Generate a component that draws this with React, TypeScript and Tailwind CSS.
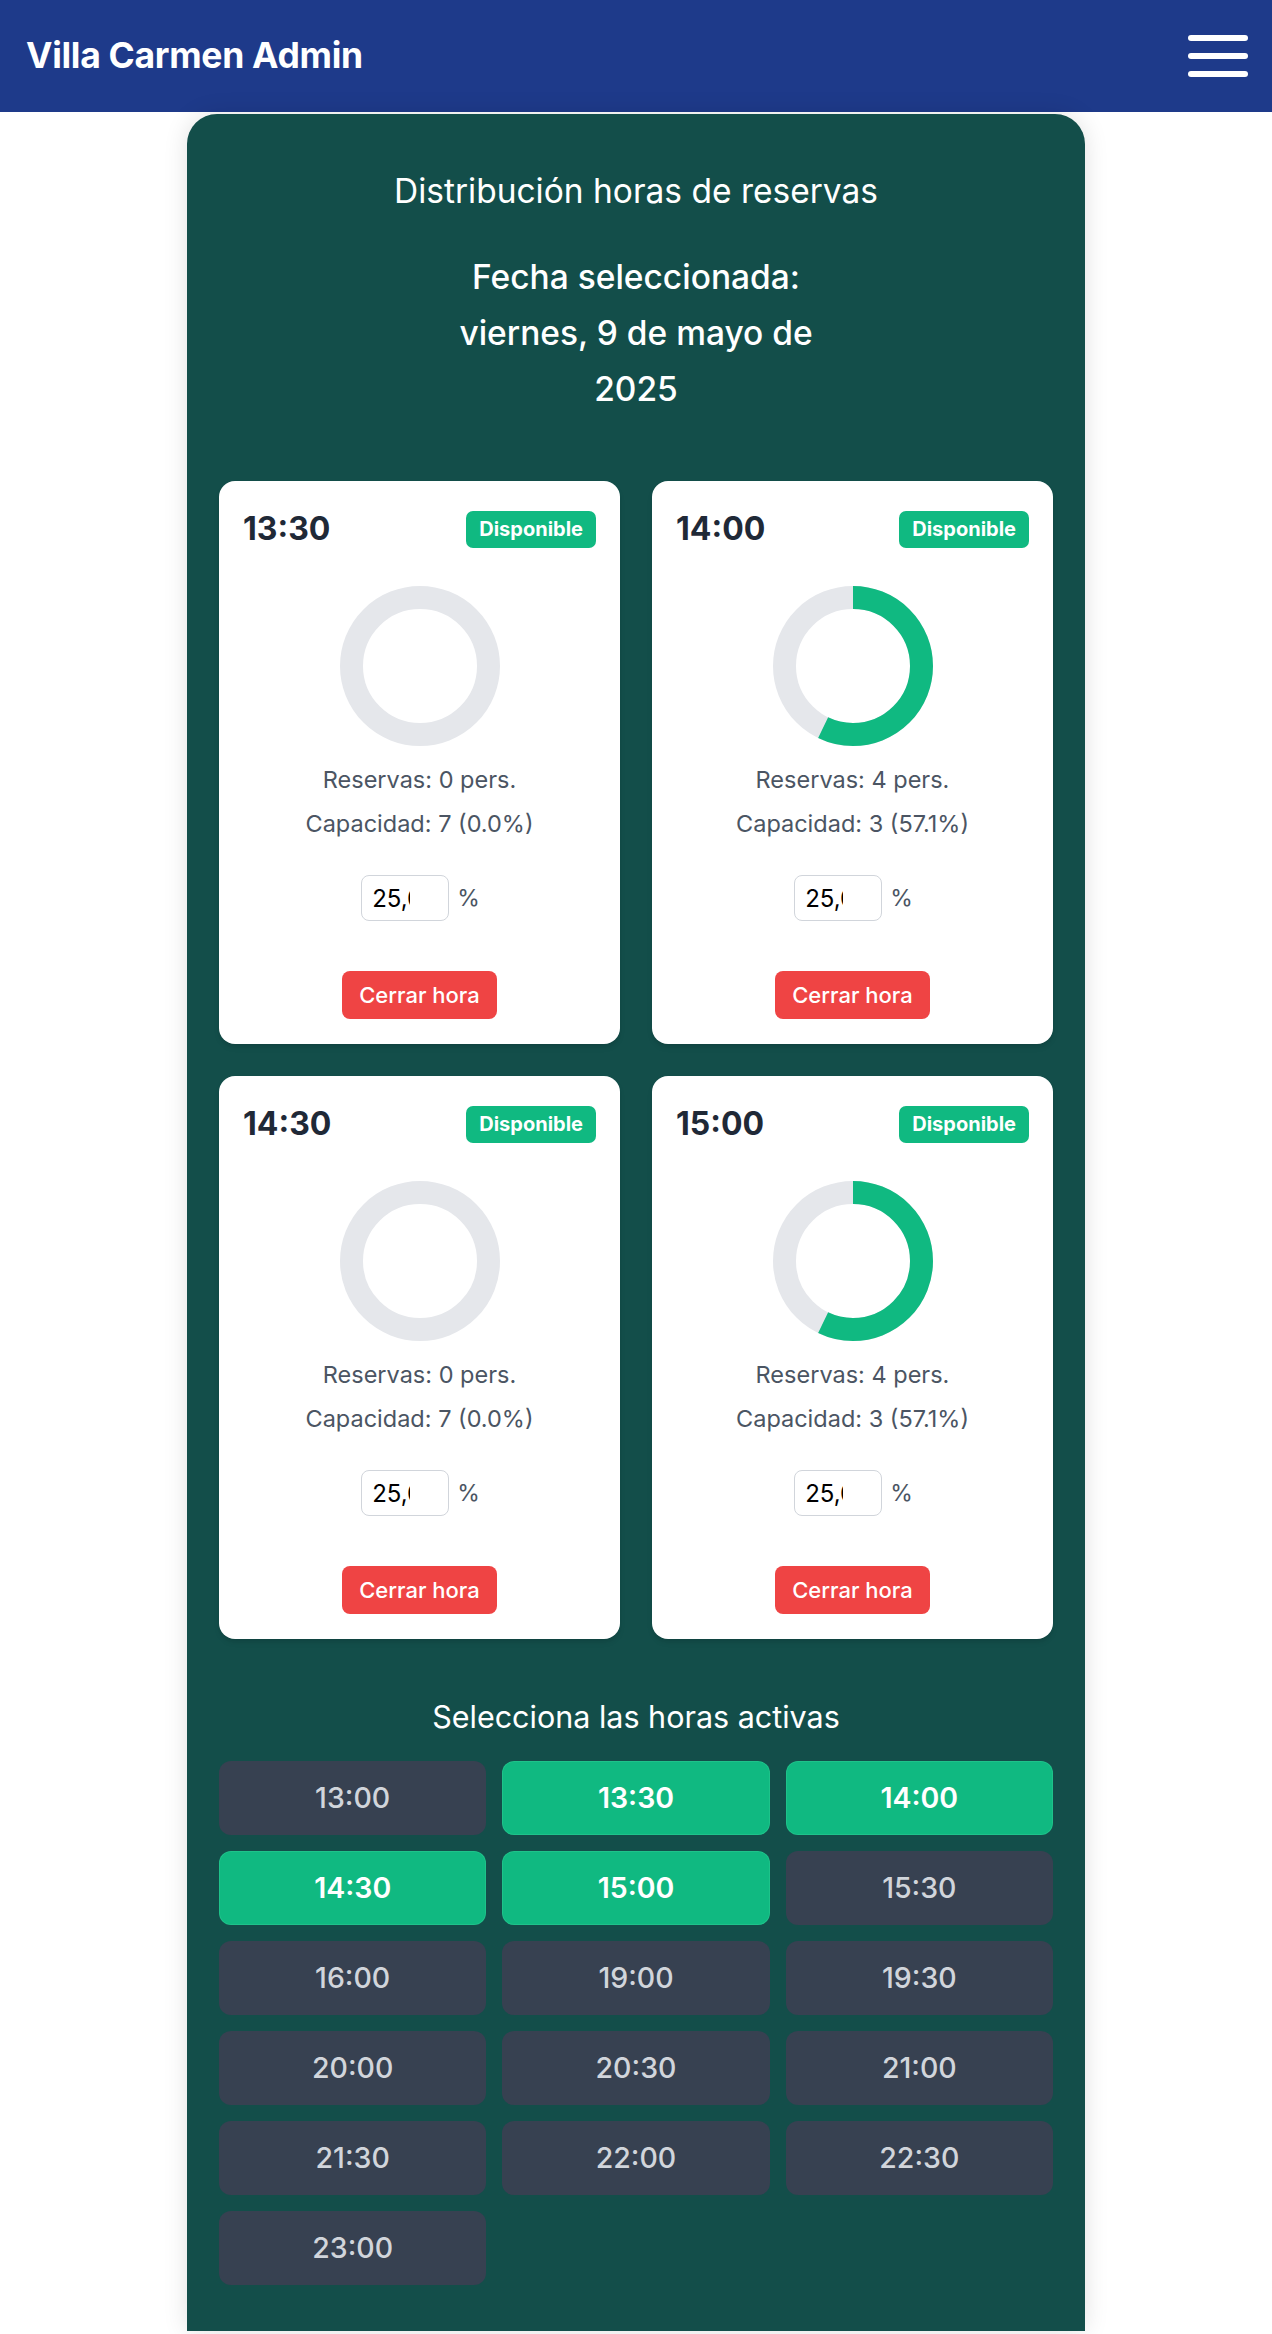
import React from "react";

type Slot = { time: string; reservas: number; capacidad: number; pct: number };

const slots: Slot[] = [
  { time: "13:30", reservas: 0, capacidad: 7, pct: 0 },
  { time: "14:00", reservas: 4, capacidad: 3, pct: 57.1 },
  { time: "14:30", reservas: 0, capacidad: 7, pct: 0 },
  { time: "15:00", reservas: 4, capacidad: 3, pct: 57.1 },
];

const hours = [
  "13:00", "13:30", "14:00", "14:30", "15:00", "15:30", "16:00", "19:00", "19:30",
  "20:00", "20:30", "21:00", "21:30", "22:00", "22:30", "23:00",
];
const active = new Set(["13:30", "14:00", "14:30", "15:00"]);

function Donut({ pct }: { pct: number }) {
  const size = 160;
  const stroke = 23;
  const r = (size - stroke) / 2;
  const c = 2 * Math.PI * r;
  const dash = (pct / 100) * c;
  return (
    <svg width={size} height={size} viewBox={`0 0 ${size} ${size}`}>
      <circle cx={size / 2} cy={size / 2} r={r} fill="none" stroke="#e5e7eb" strokeWidth={stroke} />
      {pct > 0 && (
        <circle
          cx={size / 2}
          cy={size / 2}
          r={r}
          fill="none"
          stroke="#10b981"
          strokeWidth={stroke}
          strokeDasharray={`${dash} ${c}`}
          transform={`rotate(-90 ${size / 2} ${size / 2})`}
        />
      )}
    </svg>
  );
}

function SlotCard({ s }: { s: Slot }) {
  return (
    <div className="bg-white rounded-[16px] pt-[24px] px-[24px] pb-[25px] shadow-md flex flex-col items-center">
      <div className="w-full flex items-center justify-between h-[48px]">
        <span className="text-[32px] leading-[48px] font-bold text-[#1f2937]">{s.time}</span>
        <span className="h-[37px] px-[13px] rounded-[7px] bg-[#10b981] text-white text-[20px] font-bold flex items-center">
          Disponible
        </span>
      </div>
      <div className="mt-[33px] h-[160px]">
        <Donut pct={s.pct} />
      </div>
      <p className="mt-[16px] text-[23.5px] leading-[36px] text-[#4b5563]">Reservas: {s.reservas} pers.</p>
      <p className="mt-[8px] text-[23.5px] leading-[36px] text-[#4b5563]">
        Capacidad: {s.capacidad} ({s.pct.toFixed(1)}%)
      </p>
      <div className="mt-[33px] flex items-center gap-[8px] pl-[2px]">
        <input
          type="text"
          readOnly
          value="25,00"
          className="w-[88px] h-[46px] border border-[#d1d5db] rounded-[8px] pl-[10px] pr-[38px] text-[24px] text-black bg-white outline-none"
        />
        <span className="text-[23px] text-[#4b5563]">%</span>
      </div>
      <button className="mt-[50px] h-[48px] px-[17px] rounded-[8px] bg-[#ef4444] text-white text-[22px] font-medium">
        Cerrar hora
      </button>
    </div>
  );
}

export default function App() {
  return (
    <div className="bg-white min-h-[2334px]" style={{ fontFamily: 'Inter, "Noto Sans", sans-serif' }}>
      <header className="h-[112px] bg-[#1e3a8a] flex items-center justify-between pl-[26px] pr-[24px]">
        <h1 className="text-white text-[35.5px] font-bold tracking-[-0.3px] leading-[44px]">Villa Carmen Admin</h1>
        <div className="flex flex-col gap-[12px] w-[60px]">
          <span className="block h-[6px] w-[60px] rounded-full bg-white" />
          <span className="block h-[6px] w-[60px] rounded-full bg-white" />
          <span className="block h-[6px] w-[60px] rounded-full bg-white" />
        </div>
      </header>
      <main className="w-[898px] mx-auto mt-[2px] bg-[#134e4a] rounded-t-[30px] px-[32px] pt-[53px] pb-[46px] shadow-[0_0_24px_rgba(0,0,0,0.12)]">
        <h2 className="text-center text-white text-[33.5px] leading-[48px]">Distribución horas de reservas</h2>
        <p className="mt-[34px] text-center text-white text-[33.5px] leading-[56px] font-medium">
          Fecha seleccionada:
          <br />
          viernes, 9 de mayo de
          <br />
          2025
        </p>
        <div className="mt-[64px] grid grid-cols-2 gap-[32px]">
          {slots.map((s) => (
            <SlotCard key={s.time} s={s} />
          ))}
        </div>
        <h3 className="mt-[55px] text-center text-white text-[30.5px] leading-[45px]">Selecciona las horas activas</h3>
        <div className="mt-[22px] grid grid-cols-3 gap-[16px]">
          {hours.map((h) =>
            active.has(h) ? (
              <div
                key={h}
                className="h-[74px] rounded-[12px] bg-[#10b981] border border-[#34d399]/40 flex items-center justify-center text-white text-[28.5px] font-semibold"
              >
                {h}
              </div>
            ) : (
              <div
                key={h}
                className="h-[74px] rounded-[12px] bg-[#374151] flex items-center justify-center text-[#d1d5db] text-[28.5px] font-medium"
              >
                {h}
              </div>
            )
          )}
        </div>
      </main>
    </div>
  );
}
